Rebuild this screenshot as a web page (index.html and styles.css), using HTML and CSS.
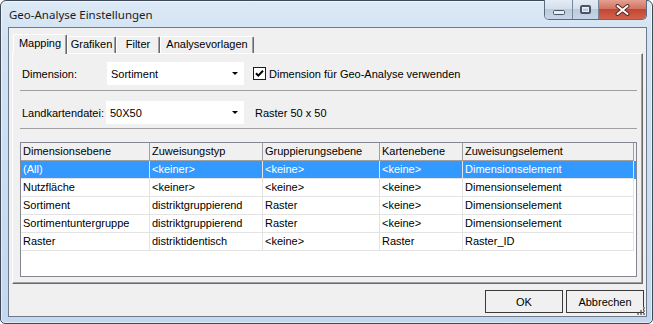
FILE: index.html
```html
<!DOCTYPE html>
<html>
	<head>
		<title>Geo-Analyse Einstellungen</title>
		<meta charset="utf-8" />
		<link rel="stylesheet" href="styles.css">
	</head>
	<body>
		<div class="window">
			<div class="titlebar">
				<span class="title">Geo-Analyse Einstellungen</span>
				<div class="caption-buttons">
					<div class="cap cap-min">
						<svg width="12" height="5" viewBox="0 0 12 5"><rect x="0.5" y="0.5" width="11" height="4" rx="1" fill="#e8edf3" stroke="#4a5563"/></svg>
					</div>
					<div class="cap cap-max">
						<svg width="11" height="9" viewBox="0 0 11 9"><rect x="0.5" y="0.5" width="10" height="8" rx="1" fill="none" stroke="#4a5563"/><rect x="2.5" y="2.5" width="6" height="4" fill="none" stroke="#e8edf3"/><rect x="1.5" y="1.5" width="8" height="6" fill="none" stroke="#4a5563"/></svg>
					</div>
					<div class="cap cap-close">
						<svg width="15" height="12" viewBox="0 0 15 12"><path d="M2.5 2 L12.5 10 M12.5 2 L2.5 10" stroke="#5b2a24" stroke-width="4" stroke-linecap="round"/><path d="M2.5 2 L12.5 10 M12.5 2 L2.5 10" stroke="#ffffff" stroke-width="2" stroke-linecap="round"/></svg>
					</div>
				</div>
			</div>

			<div class="client">
				<!-- Tabs -->
				<div class="tabs">
					<div class="tab tab-mapping active">Mapping</div>
					<div class="tab tab-grafiken">Grafiken</div>
					<div class="tab tab-filter">Filter</div>
					<div class="tab tab-analyse">Analysevorlagen</div>
				</div>

				<div class="tab-panel">
					<div class="form-row row-dimension">
						<span class="field-label">Dimension:</span>
						<div class="combo">
							<span class="combo-text">Sortiment</span>
							<span class="combo-arrow"></span>
						</div>
						<label class="check">
							<svg width="13" height="13" viewBox="0 0 13 13"><rect x="0.5" y="0.5" width="12" height="12" fill="#fff" stroke="#1c1c1c"/><path d="M3 6.2 L5.3 8.6 L10 3.8" fill="none" stroke="#000" stroke-width="2"/></svg>
							<span>Dimension für Geo-Analyse verwenden</span>
						</label>
					</div>

					<div class="separator"></div>

					<div class="form-row row-map">
						<span class="field-label">Landkartendatei:</span>
						<div class="combo">
							<span class="combo-text">50X50</span>
							<span class="combo-arrow"></span>
						</div>
						<span class="map-info">Raster 50 x 50</span>
					</div>

					<div class="separator separator-2"></div>

					<!-- Mapping grid -->
					<div class="grid">
						<div class="grid-row grid-head">
							<div class="cell">Dimensionsebene</div>
							<div class="cell">Zuweisungstyp</div>
							<div class="cell">Gruppierungsebene</div>
							<div class="cell">Kartenebene</div>
							<div class="cell">Zuweisungselement</div>
						</div>
						<div class="grid-row selected">
							<div class="cell">(All)</div>
							<div class="cell">&lt;keiner&gt;</div>
							<div class="cell">&lt;keine&gt;</div>
							<div class="cell">&lt;keine&gt;</div>
							<div class="cell">Dimensionselement</div>
						</div>
						<div class="grid-row">
							<div class="cell">Nutzfläche</div>
							<div class="cell">&lt;keiner&gt;</div>
							<div class="cell">&lt;keine&gt;</div>
							<div class="cell">&lt;keine&gt;</div>
							<div class="cell">Dimensionselement</div>
						</div>
						<div class="grid-row">
							<div class="cell">Sortiment</div>
							<div class="cell">distriktgruppierend</div>
							<div class="cell">Raster</div>
							<div class="cell">&lt;keine&gt;</div>
							<div class="cell">Dimensionselement</div>
						</div>
						<div class="grid-row">
							<div class="cell">Sortimentuntergruppe</div>
							<div class="cell">distriktgruppierend</div>
							<div class="cell">Raster</div>
							<div class="cell">&lt;keine&gt;</div>
							<div class="cell">Dimensionselement</div>
						</div>
						<div class="grid-row">
							<div class="cell">Raster</div>
							<div class="cell">distriktidentisch</div>
							<div class="cell">&lt;keine&gt;</div>
							<div class="cell">Raster</div>
							<div class="cell">Raster_ID</div>
						</div>
					</div>
				</div>

				<div class="footer">
					<button class="btn">OK</button>
					<button class="btn">Abbrechen</button>
				</div>

				<svg class="grip" width="10" height="10" viewBox="0 0 10 10">
					<g fill="#8a8a8a">
						<rect x="7" y="1" width="2" height="2"/>
						<rect x="4" y="4" width="2" height="2"/>
						<rect x="7" y="4" width="2" height="2"/>
						<rect x="1" y="7" width="2" height="2"/>
						<rect x="4" y="7" width="2" height="2"/>
						<rect x="7" y="7" width="2" height="2"/>
					</g>
				</svg>
			</div>
		</div>
	</body>
</html>
```

FILE: styles.css
```css
* {
	padding: 0;
	margin: 0;
	box-sizing: border-box;
}

body {
	width: 653px;
	height: 324px;
	overflow: hidden;
	background: #ffffff;
	font-family: "Liberation Sans", Arial, sans-serif;
	font-size: 11px;
	color: #000;
}

.window {
	width: 653px;
	height: 324px;
	border: 1px solid #404a56;
	border-radius: 6px 6px 5px 5px;
	background: linear-gradient(to bottom, #dce9f6 0, #d2e2f3 40px, #c3d8ee 100%);
	box-shadow: inset 0 0 0 1px rgba(255, 255, 255, 0.55);

	display: flex;
	flex-direction: column;
}

.titlebar {
	height: 26px;
	padding: 0 5px 0 8px;

	display: flex;
	justify-content: space-between;
	align-items: flex-start;
}

.title {
	font-family: "Noto Sans", sans-serif;
	font-size: 11.5px;
	line-height: 14px;
	padding-top: 7px;
	color: #1b1b1b;
}

.caption-buttons {
	height: 20px;
	margin-top: -1px;
	border: 1px solid #5d6b7c;
	border-top: none;
	border-radius: 0 0 5px 5px;
	overflow: hidden;

	display: flex;
}

.cap {
	height: 100%;

	display: flex;
	align-items: center;
	justify-content: center;
}

.cap-min,
.cap-max {
	width: 28px;
	background: linear-gradient(to bottom, #e4ecf5 0, #d3dfec 45%, #bccbdc 50%, #c6d6e8 100%);
	border-right: 1px solid #7a8899;
}

.cap-min svg {
	margin-top: 5px;
}

.cap-max {
	width: 26px;
}

.cap-close {
	width: 47px;
	background: linear-gradient(to bottom, #e3a191 0, #d27463 45%, #c24733 50%, #d2624c 100%);
}

.client {
	flex: 1;
	margin: 0 5px 6px 7px;
	border: 1px solid #6c7b8c;
	background: #f0f0f0;
	padding: 6px 3px 3px 3px;
	position: relative;

	display: flex;
	flex-direction: column;
}

/* Tabs */
.tabs {
	height: 19px;
	padding-left: 1px;

	display: flex;
	align-items: flex-end;
}

.tab {
	height: 17px;
	background: #f0f0f0;
	border-top: 1px solid #ffffff;
	border-left: 1px solid #ffffff;
	border-right: 1px solid #696969;
	border-radius: 2px 2px 0 0;
	box-shadow: inset -1px 0 #a0a0a0;
	text-align: center;
	line-height: 15px;
}

.tab.active {
	height: 20px;
	margin-bottom: -1px;
	position: relative;
	z-index: 2;
	line-height: 17px;
}

.tab-mapping {
	width: 54px;
}

.tab-grafiken {
	width: 49px;
}

.tab-filter {
	width: 44px;
}

.tab-analyse {
	width: 94px;
}

.tab-panel {
	flex: 1;
	border-top: 1px solid #ffffff;
	border-left: 1px solid #ffffff;
	border-right: 1px solid #696969;
	border-bottom: 1px solid #696969;
	box-shadow: inset -1px -1px #a0a0a0;
	padding: 0 5px 0 7px;

	display: flex;
	flex-direction: column;
}

.form-row {
	height: 23px;
	padding-left: 2px;

	display: flex;
	align-items: center;
}

.row-dimension {
	margin-top: 8px;
}

.row-map {
	margin-top: 10px;
}

.field-label {
	width: 85px;
}

.row-map .field-label {
	width: 84px;
}

.combo {
	width: 137px;
	height: 23px;
	background: #ffffff;
	padding: 0 6px 0 4px;

	display: flex;
	align-items: center;
	justify-content: space-between;
}

.row-map .combo {
	width: 138px;
}

.combo-arrow {
	width: 0;
	height: 0;
	border-left: 3px solid transparent;
	border-right: 3px solid transparent;
	border-top: 3px solid #000;
}

.check {
	margin-left: 9px;

	display: flex;
	align-items: center;
	gap: 3px;
}

.map-info {
	margin-left: 11px;
}

.separator {
	height: 1px;
	margin-top: 5px;
	background: #a0a0a0;
}

.separator-2 {
	margin-top: 4px;
}

/* Grid */
.grid {
	height: 135px;
	margin-top: 13px;
	background: #ffffff;
	border: 1px solid #828790;
}

.grid-row {
	height: 18px;

	display: grid;
	grid-template-columns: 129px 113px 117px 83px 171px;
}

.cell {
	padding: 0 2px;
	line-height: 17px;
	white-space: nowrap;
	overflow: hidden;
	border-right: 1px solid #e3e3e3;
	border-bottom: 1px solid #e3e3e3;
}

.grid-head {
	background: #f0f0f0;
}

.grid-head .cell {
	border-right-color: #a0a0a0;
	border-bottom-color: #a0a0a0;
}

.grid-row.selected {
	background: #3399ff;
	color: #ffffff;
}

/* Footer */
.footer {
	height: 23px;
	margin-top: 6px;
	margin-right: -1px;

	display: flex;
	justify-content: flex-end;
	gap: 3px;
}

.btn {
	width: 78px;
	height: 23px;
	font-family: "Liberation Sans", Arial, sans-serif;
	font-size: 11px;
	color: #000;
	background: #f0f0f0;
	border: 1px solid #3a3a3a;
}

.grip {
	position: absolute;
	right: 0;
	bottom: 0;
}
```
